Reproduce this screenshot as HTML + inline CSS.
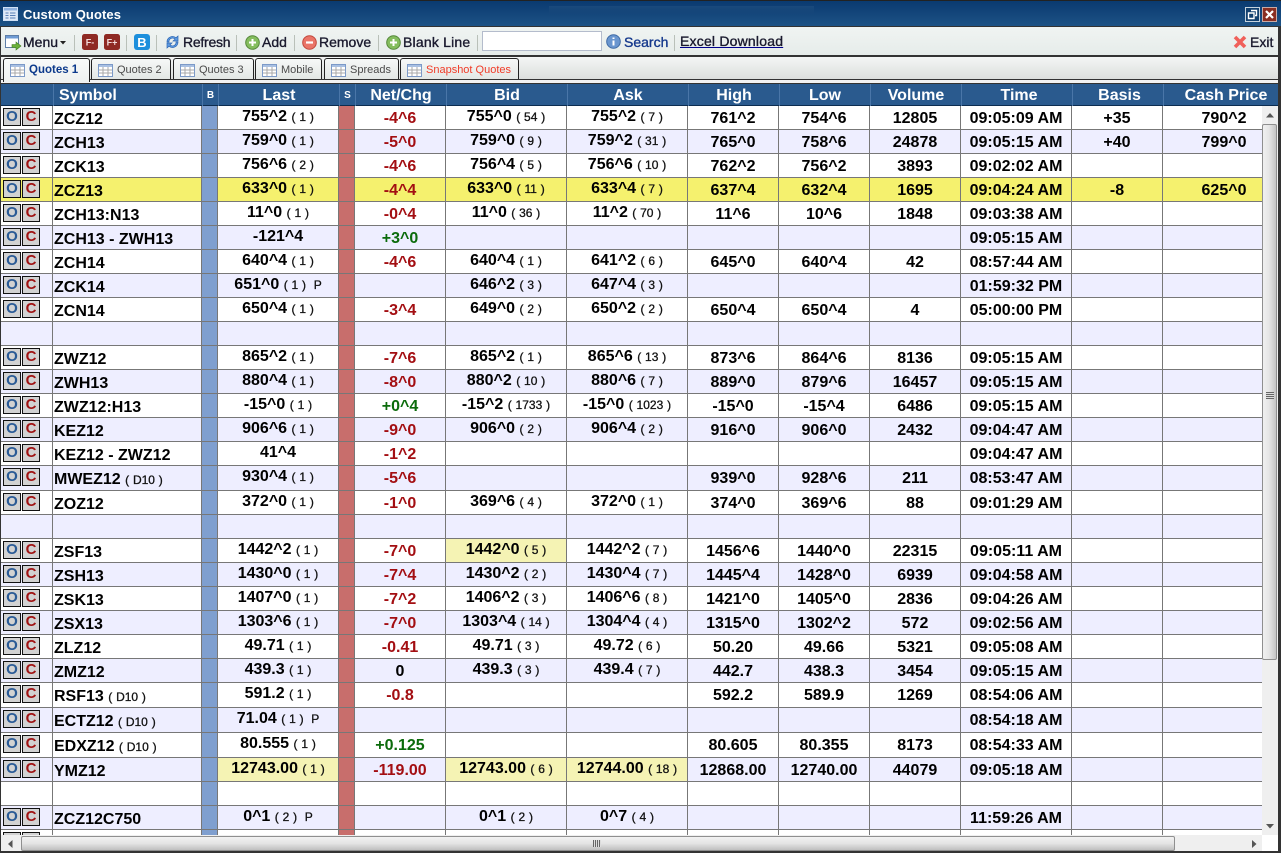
<!DOCTYPE html>
<html><head><meta charset="utf-8"><title>Custom Quotes</title>
<style>
*{box-sizing:border-box}
html,body{margin:0;padding:0;background:#fff}
body{width:1281px;height:853px;position:relative;overflow:hidden;font-family:"Liberation Sans",sans-serif;color:#000}
.abs,.t,.sep,.tab{position:absolute}
#title{position:absolute;left:0;top:0;width:1281px;height:27px;background:linear-gradient(#0a3a70,#1d5285);border-top:1px solid #222;border-bottom:1px solid #333}
#title span{position:absolute;left:23px;top:6px;font:bold 13px "Liberation Sans",sans-serif;color:#fff;letter-spacing:.1px}
#tool{position:absolute;left:0;top:27px;width:1281px;height:30px;background:linear-gradient(#f0f4f2,#e6ecea);border-bottom:2px solid #333}
.t{font-size:14px;top:34px;line-height:16px;color:#1a1a2e;-webkit-text-stroke:.35px #1a1a2e;white-space:nowrap}
.sep{top:34px;width:1px;height:16px;background:#b9c0b9}
#tabs{position:absolute;left:0;top:57px;width:1281px;height:23px;background:linear-gradient(#f4f6f5,#dcdfdd);border-bottom:1px solid #333}
.tab{top:1px;height:21px;border:1px solid #222;border-bottom:none;border-radius:3px 3px 0 0;background:linear-gradient(#f6f8f7,#e3e7e5);font-size:11px;line-height:22px;color:#4a4a4a;padding-left:25px;white-space:nowrap}
.tab svg{position:absolute;left:6px;top:5px}
#bar{position:absolute;left:0;top:80px;width:1281px;height:3px;background:#f2f2f2}
#headline{position:absolute;left:0;top:83px;width:1281px;height:1px;background:#333}
#head{position:absolute;left:1px;top:84px;width:1277px;height:22px;display:grid;grid-template-columns:53px 149px 16px 121px 16px 91px 121px 121px 91px 91px 91px 111px 91px 114px;background:#2a5a8e;border-bottom:1px solid #0c2c50}
#head div{color:#fff;font-weight:bold;font-size:16px;line-height:23px;text-align:center;border-right:1px solid #4a76a8}
#head div.n{border-right:none;padding-left:10px;white-space:nowrap}
#head div.sm{font-size:10px}
#head div.sy{text-align:left;padding-left:5px}
#wrap{position:absolute;left:1px;top:106px;width:1261px;height:729px;overflow:hidden}
.r{display:grid;height:24px;grid-template-columns:52px 149px 16px 121px 16px 91px 121px 121px 91px 91px 91px 111px 91px 99px;background:#fff;font-weight:bold;font-size:16px;line-height:26px;text-align:center;white-space:nowrap}
.r.d{height:25px}
.r.o{background:#eeeeff}
.r.y{background:#f5f16e}
.r>div{border-right:1px solid #777;border-bottom:1px solid #777;overflow:hidden}
.r>div:nth-child(1){position:relative}
.r>div:nth-child(2){text-align:left;padding:3px 0 0 1px;line-height:22px}
.r>div:nth-child(3){background:#7f9fcf}
.r>div:nth-child(5){background:#c86e6c}
.r>div:nth-child(14){border-right:none;border-bottom:1px solid #777;padding-left:23px}
.r>div:nth-child(4),.r>div:nth-child(7),.r>div:nth-child(8){line-height:22px}
.r em{font-style:normal;font-weight:normal;font-size:12px;color:#111;-webkit-text-stroke:.3px #111;word-spacing:.5px}
.r>div.h{background:#f5f3b4}
.red{color:#a30e12}
.grn{color:#0b6b0b}
.r a{position:absolute;top:2px;width:18px;height:18px;background:#d2d2d2;border:1px solid #111;font-size:15px;line-height:16px;text-align:center}
.r a.a{left:2px;color:#2a5a95}
.r a.b{left:21px;color:#a01414}
#vs{position:absolute;left:1262px;top:106px;width:16px;height:729px;background:#efefef}
#hs{position:absolute;left:1px;top:835px;width:1261px;height:17px;background:#efefef}
#vth{position:absolute;left:0;top:18px;width:15px;height:536px;background:linear-gradient(90deg,#f0f0f0,#e6e6e6 45%,#c4c4c4);border:1px solid #8f8f8f;border-radius:2px}
#hth{position:absolute;left:20px;top:1px;width:1154px;height:15px;background:linear-gradient(#f2f2f2,#e4e4e4 50%,#bfbfbf);border:1px solid #8f8f8f;border-radius:2px}
</style></head><body>

<div id="title">
<svg class="abs" style="left:3px;top:6px" width="15" height="14" viewBox="0 0 15 14"><rect x=".5" y=".5" width="14" height="13" fill="#dfe8f6" stroke="#cfe0f5"/><rect x="1" y="1" width="13" height="2.5" fill="#8fb2e0"/><path d="M2.5 6h3M7 6h5.5M2.5 8.5h3M7 8.5h5.5M2.5 11h3M7 11h5.5" stroke="#5a7fb5" stroke-width="1"/></svg>
<span>Custom Quotes</span>
<div class="abs" style="left:549px;top:5px;width:265px;height:9px;background:linear-gradient(#1a4a7c,#1a4a7c00)"></div>
<svg class="abs" style="left:1245px;top:6px" width="15" height="15" viewBox="0 0 15 15"><rect x=".5" y=".5" width="14" height="14" fill="#12406f" stroke="#c5d2dd"/><path d="M6 3.5h5.500v5H10M3.5 6h5.500v5.500H3.500z" fill="none" stroke="#fff" stroke-width="1.4"/></svg>
<svg class="abs" style="left:1262px;top:6px" width="15" height="15" viewBox="0 0 15 15"><rect x=".5" y=".5" width="14" height="14" fill="#8a2e22" stroke="#c9a9a4"/><path d="M4 4l7 7M11 4l-7 7" stroke="#fff" stroke-width="2.2"/></svg>
</div>

<div id="tool">
<svg class="abs" style="left:5px;top:8px" width="17" height="16" viewBox="0 0 17 16"><rect x=".5" y=".5" width="13" height="12" fill="#fff" stroke="#5f7fa8"/><rect x="1" y="1" width="12" height="2.5" fill="#6f9bd4"/><path d="M7 9.500h4V7l5 4-5 4v-2.500H7z" fill="#6bb13a" stroke="#3f7d1d" stroke-width=".6"/></svg>
<span class="t" style="left:23px;top:7px">Menu</span>
<svg class="abs" style="left:60px;top:14px" width="6" height="4"><path d="M0 0h6L3 3.500z" fill="#222"/></svg>
<div class="sep" style="left:74px;top:8px"></div>
<svg class="abs" style="left:82px;top:7px" width="16" height="16" viewBox="0 0 16 16"><rect width="16" height="16" rx="2.500" fill="#8f2a24"/><text x="8" y="11.500" font-family="Liberation Sans" font-size="9" font-weight="bold" fill="#f3dcdc" text-anchor="middle">F-</text></svg>
<svg class="abs" style="left:104px;top:7px" width="16" height="16" viewBox="0 0 16 16"><rect width="16" height="16" rx="2.500" fill="#8f2a24"/><text x="8" y="11.500" font-family="Liberation Sans" font-size="9" font-weight="bold" fill="#f3dcdc" text-anchor="middle">F+</text></svg>
<div class="sep" style="left:126px;top:8px"></div>
<svg class="abs" style="left:134px;top:7px" width="16" height="16" viewBox="0 0 16 16"><rect width="16" height="16" rx="3" fill="#1d8fdc"/><text x="8" y="13" font-family="Liberation Sans" font-size="13" font-weight="bold" fill="#fff" text-anchor="middle">B</text></svg>
<div class="sep" style="left:156px;top:8px"></div>
<svg class="abs" style="left:165px;top:7px" width="15" height="16" viewBox="0 0 15 16"><path d="M2 8a5.500 5.500 0 0 1 9-4.200L13 2v5H8l2-1.800A3.500 3.500 0 0 0 4 8z" fill="#5f9ae0" stroke="#2a66b5" stroke-width=".7"/><path d="M13 8a5.500 5.500 0 0 1-9 4.200L2 14V9h5l-2 1.800A3.500 3.500 0 0 0 11 8z" fill="#5f9ae0" stroke="#2a66b5" stroke-width=".7"/></svg>
<span class="t" style="left:183px;top:7px;letter-spacing:-.25px">Refresh</span>
<div class="sep" style="left:236px;top:8px"></div>
<svg class="abs" style="left:245px;top:8px" width="15" height="15" viewBox="0 0 15 15"><circle cx="7.500" cy="7.500" r="6.800" fill="#84bd5e" stroke="#55883a"/><path d="M7.500 4v7M4 7.500h7" stroke="#fff" stroke-width="2"/></svg>
<span class="t" style="left:262px;top:7px">Add</span>
<div class="sep" style="left:294px;top:8px"></div>
<svg class="abs" style="left:302px;top:8px" width="15" height="15" viewBox="0 0 15 15"><circle cx="7.500" cy="7.500" r="6.800" fill="#ea7468" stroke="#c2483c"/><path d="M4 7.500h7" stroke="#fff" stroke-width="2.200"/></svg>
<span class="t" style="left:319px;top:7px">Remove</span>
<div class="sep" style="left:378px;top:8px"></div>
<svg class="abs" style="left:386px;top:8px" width="15" height="15" viewBox="0 0 15 15"><circle cx="7.500" cy="7.500" r="6.800" fill="#84bd5e" stroke="#55883a"/><path d="M7.500 4v7M4 7.500h7" stroke="#fff" stroke-width="2"/></svg>
<span class="t" style="left:403px;top:7px;letter-spacing:.2px">Blank Line</span>
<div class="sep" style="left:477px;top:8px"></div>
<div class="abs" style="left:482px;top:4px;width:120px;height:20px;background:#fff;border:1px solid #b4bccc"></div>
<svg class="abs" style="left:606px;top:7px" width="15" height="15" viewBox="0 0 15 15"><circle cx="7.500" cy="7.500" r="6.800" fill="#6a96cf" stroke="#3f6ba6"/><path d="M7.500 3.500v1.500M7.500 6.500v5" stroke="#fff" stroke-width="2"/></svg>
<span class="t" style="left:624px;top:7px;color:#14388c;-webkit-text-stroke:.35px #14388c">Search</span>
<div class="sep" style="left:674px;top:8px"></div>
<span class="t" style="left:680px;top:6px;letter-spacing:.2px;text-decoration:underline;text-decoration-color:#00008b">Excel Download</span>
<svg class="abs" style="left:1233px;top:8px" width="14" height="14" viewBox="0 0 14 14"><path d="M2 2l10 10M12 2L2 12" stroke="#f0605a" stroke-width="3.600"/></svg>
<span class="t" style="left:1250px;top:7px">Exit</span>
</div>

<div id="bar"></div>
<div id="headline"></div>
<div id="tabs">
<div class="tab" style="left:3px;width:87px;height:24px;background:linear-gradient(#f8faf9,#eef1f0);font-weight:bold;font-size:11.500px;color:#0c3a8c"><svg width="15" height="13" viewBox="0 0 15 13"><rect x=".5" y=".5" width="14" height="12" fill="#fff" stroke="#7c9ac8"/><rect x="1" y="1" width="13" height="2" fill="#a9c0e2"/><path d="M1 6h13M1 9h13M5 3v9M10 3v9" stroke="#a8a8a8" stroke-width="1"/></svg>Quotes 1</div>
<div class="tab" style="left:91px;width:80px"><svg width="15" height="13" viewBox="0 0 15 13"><rect x=".5" y=".5" width="14" height="12" fill="#fff" stroke="#7c9ac8"/><rect x="1" y="1" width="13" height="2" fill="#a9c0e2"/><path d="M1 6h13M1 9h13M5 3v9M10 3v9" stroke="#a8a8a8" stroke-width="1"/></svg>Quotes 2</div>
<div class="tab" style="left:173px;width:81px"><svg width="15" height="13" viewBox="0 0 15 13"><rect x=".5" y=".5" width="14" height="12" fill="#fff" stroke="#7c9ac8"/><rect x="1" y="1" width="13" height="2" fill="#a9c0e2"/><path d="M1 6h13M1 9h13M5 3v9M10 3v9" stroke="#a8a8a8" stroke-width="1"/></svg>Quotes 3</div>
<div class="tab" style="left:255px;width:67px"><svg width="15" height="13" viewBox="0 0 15 13"><rect x=".5" y=".5" width="14" height="12" fill="#fff" stroke="#7c9ac8"/><rect x="1" y="1" width="13" height="2" fill="#a9c0e2"/><path d="M1 6h13M1 9h13M5 3v9M10 3v9" stroke="#a8a8a8" stroke-width="1"/></svg>Mobile</div>
<div class="tab" style="left:324px;width:75px"><svg width="15" height="13" viewBox="0 0 15 13"><rect x=".5" y=".5" width="14" height="12" fill="#fff" stroke="#7c9ac8"/><rect x="1" y="1" width="13" height="2" fill="#a9c0e2"/><path d="M1 6h13M1 9h13M5 3v9M10 3v9" stroke="#a8a8a8" stroke-width="1"/></svg>Spreads</div>
<div class="tab" style="left:400px;width:119px;color:#f03c28"><svg width="15" height="13" viewBox="0 0 15 13"><rect x=".5" y=".5" width="14" height="12" fill="#fff" stroke="#7c9ac8"/><rect x="1" y="1" width="13" height="2" fill="#a9c0e2"/><path d="M1 6h13M1 9h13M5 3v9M10 3v9" stroke="#a8a8a8" stroke-width="1"/></svg>Snapshot Quotes</div>
</div>

<div id="head"><div></div><div class="sy">Symbol</div><div class="sm">B</div><div>Last</div><div class="sm">S</div><div>Net/Chg</div><div>Bid</div><div>Ask</div><div>High</div><div>Low</div><div>Volume</div><div style="padding-left:4px">Time</div><div style="padding-left:3px">Basis</div><div class="n">Cash Price</div></div>

<div id="wrap">
<div class="r"><div><a class="a">O</a><a class="b">C</a></div><div>ZCZ12</div><div></div><div>755^2 <em>( 1 )</em></div><div></div><div class="red">-4^6</div><div>755^0 <em>( 54 )</em></div><div>755^2 <em>( 7 )</em></div><div>761^2</div><div>754^6</div><div>12805</div><div>09:05:09 AM</div><div>+35</div><div>790^2</div></div>
<div class="r o"><div><a class="a">O</a><a class="b">C</a></div><div>ZCH13</div><div></div><div>759^0 <em>( 1 )</em></div><div></div><div class="red">-5^0</div><div>759^0 <em>( 9 )</em></div><div>759^2 <em>( 31 )</em></div><div>765^0</div><div>758^6</div><div>24878</div><div>09:05:15 AM</div><div>+40</div><div>799^0</div></div>
<div class="r"><div><a class="a">O</a><a class="b">C</a></div><div>ZCK13</div><div></div><div>756^6 <em>( 2 )</em></div><div></div><div class="red">-4^6</div><div>756^4 <em>( 5 )</em></div><div>756^6 <em>( 10 )</em></div><div>762^2</div><div>756^2</div><div>3893</div><div>09:02:02 AM</div><div></div><div></div></div>
<div class="r y"><div><a class="a">O</a><a class="b">C</a></div><div>ZCZ13</div><div></div><div>633^0 <em>( 1 )</em></div><div></div><div class="red">-4^4</div><div>633^0 <em>( 11 )</em></div><div>633^4 <em>( 7 )</em></div><div>637^4</div><div>632^4</div><div>1695</div><div>09:04:24 AM</div><div>-8</div><div>625^0</div></div>
<div class="r"><div><a class="a">O</a><a class="b">C</a></div><div>ZCH13:N13</div><div></div><div>11^0 <em>( 1 )</em></div><div></div><div class="red">-0^4</div><div>11^0 <em>( 36 )</em></div><div>11^2 <em>( 70 )</em></div><div>11^6</div><div>10^6</div><div>1848</div><div>09:03:38 AM</div><div></div><div></div></div>
<div class="r o"><div><a class="a">O</a><a class="b">C</a></div><div>ZCH13 - ZWH13</div><div></div><div>-121^4</div><div></div><div class="grn">+3^0</div><div></div><div></div><div></div><div></div><div></div><div>09:05:15 AM</div><div></div><div></div></div>
<div class="r"><div><a class="a">O</a><a class="b">C</a></div><div>ZCH14</div><div></div><div>640^4 <em>( 1 )</em></div><div></div><div class="red">-4^6</div><div>640^4 <em>( 1 )</em></div><div>641^2 <em>( 6 )</em></div><div>645^0</div><div>640^4</div><div>42</div><div>08:57:44 AM</div><div></div><div></div></div>
<div class="r o"><div><a class="a">O</a><a class="b">C</a></div><div>ZCK14</div><div></div><div>651^0 <em>( 1 ) &nbsp;P</em></div><div></div><div></div><div>646^2 <em>( 3 )</em></div><div>647^4 <em>( 3 )</em></div><div></div><div></div><div></div><div>01:59:32 PM</div><div></div><div></div></div>
<div class="r"><div><a class="a">O</a><a class="b">C</a></div><div>ZCN14</div><div></div><div>650^4 <em>( 1 )</em></div><div></div><div class="red">-3^4</div><div>649^0 <em>( 2 )</em></div><div>650^2 <em>( 2 )</em></div><div>650^4</div><div>650^4</div><div>4</div><div>05:00:00 PM</div><div></div><div></div></div>
<div class="r o"><div></div><div></div><div></div><div></div><div></div><div></div><div></div><div></div><div></div><div></div><div></div><div></div><div></div><div></div></div>
<div class="r"><div><a class="a">O</a><a class="b">C</a></div><div>ZWZ12</div><div></div><div>865^2 <em>( 1 )</em></div><div></div><div class="red">-7^6</div><div>865^2 <em>( 1 )</em></div><div>865^6 <em>( 13 )</em></div><div>873^6</div><div>864^6</div><div>8136</div><div>09:05:15 AM</div><div></div><div></div></div>
<div class="r o"><div><a class="a">O</a><a class="b">C</a></div><div>ZWH13</div><div></div><div>880^4 <em>( 1 )</em></div><div></div><div class="red">-8^0</div><div>880^2 <em>( 10 )</em></div><div>880^6 <em>( 7 )</em></div><div>889^0</div><div>879^6</div><div>16457</div><div>09:05:15 AM</div><div></div><div></div></div>
<div class="r"><div><a class="a">O</a><a class="b">C</a></div><div>ZWZ12:H13</div><div></div><div>-15^0 <em>( 1 )</em></div><div></div><div class="grn">+0^4</div><div>-15^2 <em>( 1733 )</em></div><div>-15^0 <em>( 1023 )</em></div><div>-15^0</div><div>-15^4</div><div>6486</div><div>09:05:15 AM</div><div></div><div></div></div>
<div class="r o"><div><a class="a">O</a><a class="b">C</a></div><div>KEZ12</div><div></div><div>906^6 <em>( 1 )</em></div><div></div><div class="red">-9^0</div><div>906^0 <em>( 2 )</em></div><div>906^4 <em>( 2 )</em></div><div>916^0</div><div>906^0</div><div>2432</div><div>09:04:47 AM</div><div></div><div></div></div>
<div class="r"><div><a class="a">O</a><a class="b">C</a></div><div>KEZ12 - ZWZ12</div><div></div><div>41^4</div><div></div><div class="red">-1^2</div><div></div><div></div><div></div><div></div><div></div><div>09:04:47 AM</div><div></div><div></div></div>
<div class="r o d"><div><a class="a">O</a><a class="b">C</a></div><div>MWEZ12 <em>( D10 )</em></div><div></div><div>930^4 <em>( 1 )</em></div><div></div><div class="red">-5^6</div><div></div><div></div><div>939^0</div><div>928^6</div><div>211</div><div>08:53:47 AM</div><div></div><div></div></div>
<div class="r"><div><a class="a">O</a><a class="b">C</a></div><div>ZOZ12</div><div></div><div>372^0 <em>( 1 )</em></div><div></div><div class="red">-1^0</div><div>369^6 <em>( 4 )</em></div><div>372^0 <em>( 1 )</em></div><div>374^0</div><div>369^6</div><div>88</div><div>09:01:29 AM</div><div></div><div></div></div>
<div class="r o"><div></div><div></div><div></div><div></div><div></div><div></div><div></div><div></div><div></div><div></div><div></div><div></div><div></div><div></div></div>
<div class="r"><div><a class="a">O</a><a class="b">C</a></div><div>ZSF13</div><div></div><div>1442^2 <em>( 1 )</em></div><div></div><div class="red">-7^0</div><div class="h">1442^0 <em>( 5 )</em></div><div>1442^2 <em>( 7 )</em></div><div>1456^6</div><div>1440^0</div><div>22315</div><div>09:05:11 AM</div><div></div><div></div></div>
<div class="r o"><div><a class="a">O</a><a class="b">C</a></div><div>ZSH13</div><div></div><div>1430^0 <em>( 1 )</em></div><div></div><div class="red">-7^4</div><div>1430^2 <em>( 2 )</em></div><div>1430^4 <em>( 7 )</em></div><div>1445^4</div><div>1428^0</div><div>6939</div><div>09:04:58 AM</div><div></div><div></div></div>
<div class="r"><div><a class="a">O</a><a class="b">C</a></div><div>ZSK13</div><div></div><div>1407^0 <em>( 1 )</em></div><div></div><div class="red">-7^2</div><div>1406^2 <em>( 3 )</em></div><div>1406^6 <em>( 8 )</em></div><div>1421^0</div><div>1405^0</div><div>2836</div><div>09:04:26 AM</div><div></div><div></div></div>
<div class="r o"><div><a class="a">O</a><a class="b">C</a></div><div>ZSX13</div><div></div><div>1303^6 <em>( 1 )</em></div><div></div><div class="red">-7^0</div><div>1303^4 <em>( 14 )</em></div><div>1304^4 <em>( 4 )</em></div><div>1315^0</div><div>1302^2</div><div>572</div><div>09:02:56 AM</div><div></div><div></div></div>
<div class="r"><div><a class="a">O</a><a class="b">C</a></div><div>ZLZ12</div><div></div><div>49.71 <em>( 1 )</em></div><div></div><div class="red">-0.41</div><div>49.71 <em>( 3 )</em></div><div>49.72 <em>( 6 )</em></div><div>50.20</div><div>49.66</div><div>5321</div><div>09:05:08 AM</div><div></div><div></div></div>
<div class="r o"><div><a class="a">O</a><a class="b">C</a></div><div>ZMZ12</div><div></div><div>439.3 <em>( 1 )</em></div><div></div><div>0</div><div>439.3 <em>( 3 )</em></div><div>439.4 <em>( 7 )</em></div><div>442.7</div><div>438.3</div><div>3454</div><div>09:05:15 AM</div><div></div><div></div></div>
<div class="r d"><div><a class="a">O</a><a class="b">C</a></div><div>RSF13 <em>( D10 )</em></div><div></div><div>591.2 <em>( 1 )</em></div><div></div><div class="red">-0.8</div><div></div><div></div><div>592.2</div><div>589.9</div><div>1269</div><div>08:54:06 AM</div><div></div><div></div></div>
<div class="r o d"><div><a class="a">O</a><a class="b">C</a></div><div>ECTZ12 <em>( D10 )</em></div><div></div><div>71.04 <em>( 1 ) &nbsp;P</em></div><div></div><div></div><div></div><div></div><div></div><div></div><div></div><div>08:54:18 AM</div><div></div><div></div></div>
<div class="r d"><div><a class="a">O</a><a class="b">C</a></div><div>EDXZ12 <em>( D10 )</em></div><div></div><div>80.555 <em>( 1 )</em></div><div></div><div class="grn">+0.125</div><div></div><div></div><div>80.605</div><div>80.355</div><div>8173</div><div>08:54:33 AM</div><div></div><div></div></div>
<div class="r o"><div><a class="a">O</a><a class="b">C</a></div><div>YMZ12</div><div></div><div class="h">12743.00 <em>( 1 )</em></div><div></div><div class="red">-119.00</div><div class="h">12743.00 <em>( 6 )</em></div><div class="h">12744.00 <em>( 18 )</em></div><div>12868.00</div><div>12740.00</div><div>44079</div><div>09:05:18 AM</div><div></div><div></div></div>
<div class="r"><div></div><div></div><div></div><div></div><div></div><div></div><div></div><div></div><div></div><div></div><div></div><div></div><div></div><div></div></div>
<div class="r o"><div><a class="a">O</a><a class="b">C</a></div><div>ZCZ12C750</div><div></div><div>0^1 <em>( 2 ) &nbsp;P</em></div><div></div><div></div><div>0^1 <em>( 2 )</em></div><div>0^7 <em>( 4 )</em></div><div></div><div></div><div></div><div>11:59:26 AM</div><div></div><div></div></div>
<div class="r"><div><a class="a">O</a><a class="b">C</a></div><div></div><div></div><div></div><div></div><div></div><div></div><div></div><div></div><div></div><div></div><div></div><div></div><div></div></div>
</div>

<div id="vs"><svg class="abs" style="left:4px;top:7px" width="8" height="5"><path d="M0 4.500L4 0l4 4.500z" fill="#555"/></svg><div id="vth"><div class="abs" style="left:3px;top:267px;width:8px;height:7px;background:repeating-linear-gradient(#666 0 1px,#ddd 1px 2px)"></div></div><svg class="abs" style="left:4px;top:718px" width="8" height="5"><path d="M0 0l4 4.500L8 0z" fill="#555"/></svg></div>
<div id="hs"><svg class="abs" style="left:7px;top:5px" width="5" height="8"><path d="M4.500 0L0 4l4.500 4z" fill="#555"/></svg><div id="hth"><div class="abs" style="left:571px;top:3px;width:8px;height:7px;background:repeating-linear-gradient(90deg,#666 0 1px,#ddd 1px 2px)"></div></div><svg class="abs" style="left:1251px;top:5px" width="5" height="8"><path d="M0 0l4.500 4L0 8z" fill="#555"/></svg></div>

<div class="abs" style="left:0;top:27px;width:1px;height:826px;background:#333"></div>
<div class="abs" style="left:1278px;top:27px;width:3px;height:826px;background:#333"></div>
<div class="abs" style="left:0;top:851px;width:1281px;height:2px;background:#333"></div>
</body></html>
